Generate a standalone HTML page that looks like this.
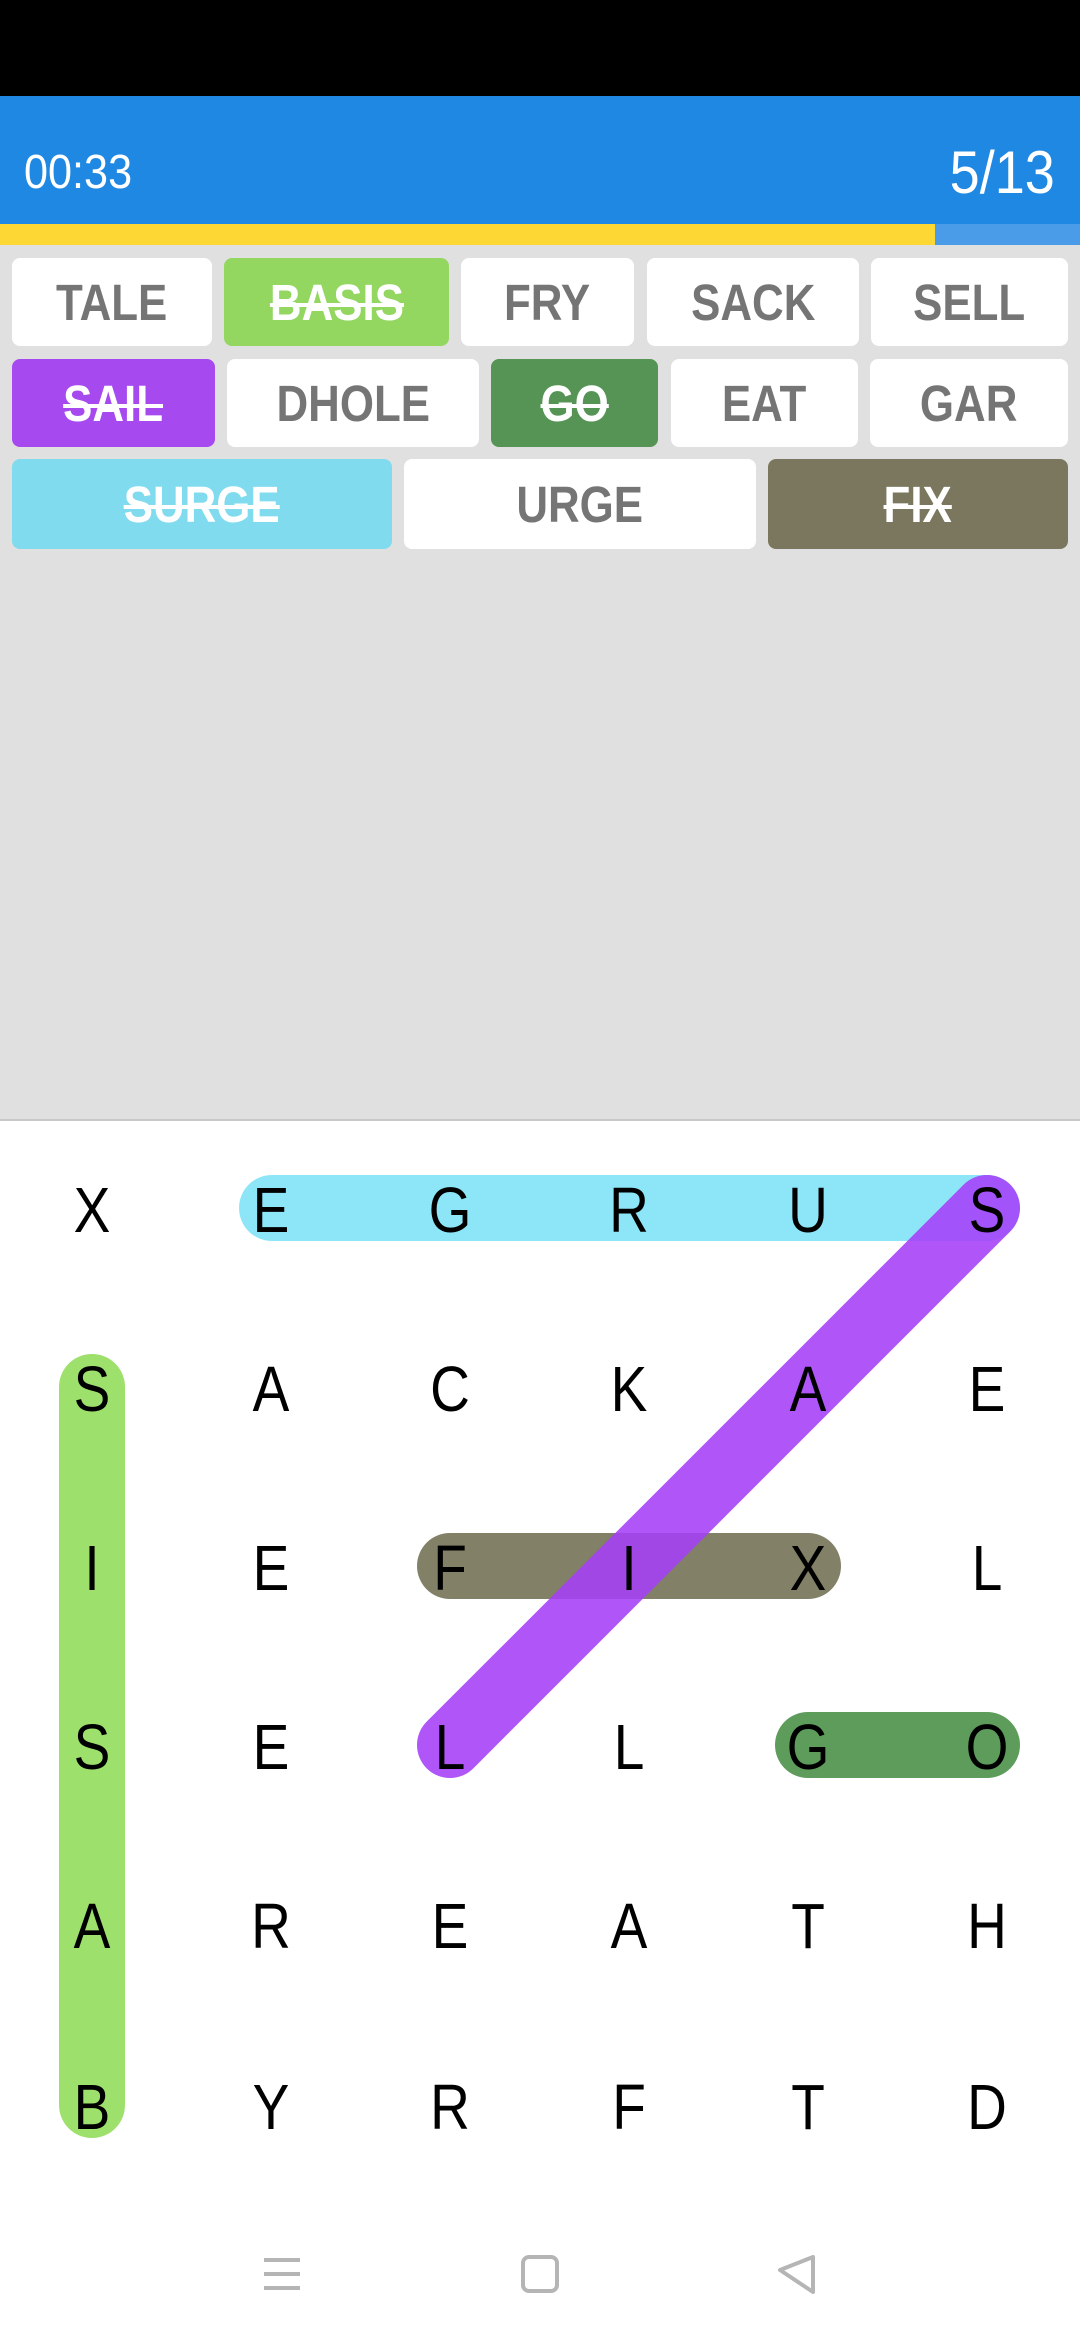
<!DOCTYPE html>
<html><head><meta charset="utf-8"><style>
*{margin:0;padding:0;box-sizing:border-box}
body{width:1080px;height:2340px;position:relative;background:#fff;font-family:"Liberation Sans",sans-serif;overflow:hidden}
.abs{position:absolute}
.chip{position:absolute;border-radius:8px;background:#fff;color:#757575;font-weight:bold;font-size:51px;display:flex;align-items:center;justify-content:center}
.chip.done{color:#fff;text-decoration:line-through;text-decoration-thickness:4px}
.chip span{display:inline-block;transform:scaleX(0.86)}
.l{position:absolute;width:120px;margin-left:-60px;text-align:center;font-size:64px;line-height:64px;margin-top:-30px;color:#000;transform:scaleX(0.86)}
</style></head><body>
<div class="abs" style="left:0;top:0;width:1080px;height:96px;background:#000"></div>
<div class="abs" style="left:0;top:96px;width:1080px;height:128px;background:#1f88e3"></div>
<div class="abs" style="left:24px;top:146px;color:#fff;font-size:48px;line-height:54px;transform:scaleX(0.9);transform-origin:left">00:33</div>
<div class="abs" style="right:25px;top:140px;color:#fff;font-size:60px;line-height:66px;transform:scaleX(0.9);transform-origin:right">5/13</div>
<div class="abs" style="left:0;top:224px;width:1080px;height:21px;background:#4a9be8"></div>
<div class="abs" style="left:0;top:224px;width:935px;height:21px;background:#fdd835"></div>
<div class="abs" style="left:0;top:245px;width:1080px;height:875px;background:#e0e0e0"></div>
<div class="abs" style="left:0;top:1119px;width:1080px;height:2px;background:#c8c8c8"></div>

<div class="chip" style="left:12px;top:258px;width:200px;height:88px"><span>TALE</span></div>
<div class="chip done" style="left:224px;top:258px;width:225px;height:88px;background:#93d660"><span>BASIS</span></div>
<div class="chip" style="left:461px;top:258px;width:173px;height:88px"><span>FRY</span></div>
<div class="chip" style="left:647px;top:258px;width:212px;height:88px"><span>SACK</span></div>
<div class="chip" style="left:871px;top:258px;width:197px;height:88px"><span>SELL</span></div>

<div class="chip done" style="left:12px;top:359px;width:203px;height:88px;background:#a64af0"><span>SAIL</span></div>
<div class="chip" style="left:227px;top:359px;width:252px;height:88px"><span>DHOLE</span></div>
<div class="chip done" style="left:491px;top:359px;width:167px;height:88px;background:#559455"><span>GO</span></div>
<div class="chip" style="left:671px;top:359px;width:187px;height:88px"><span>EAT</span></div>
<div class="chip" style="left:870px;top:359px;width:198px;height:88px"><span>GAR</span></div>

<div class="chip done" style="left:12px;top:459px;width:380px;height:90px;background:#80dbee"><span>SURGE</span></div>
<div class="chip" style="left:404px;top:459px;width:352px;height:90px"><span>URGE</span></div>
<div class="chip done" style="left:768px;top:459px;width:300px;height:90px;background:#7a775e"><span>FIX</span></div>

<svg class="abs" style="left:0;top:0" width="1080" height="2340">
<g stroke-linecap="round" stroke-width="66" fill="none">
<line x1="272" y1="1208" x2="987" y2="1208" stroke="#8ce6f8"/>
<line x1="92" y1="1387" x2="92" y2="2105" stroke="#9de06c"/>
<line x1="450" y1="1566" x2="808" y2="1566" stroke="#828067"/>
<line x1="808" y1="1745" x2="987" y2="1745" stroke="#5e9c5c"/>
<line x1="450" y1="1745" x2="987" y2="1208" stroke="#a53ff8" stroke-opacity="0.88"/>
</g>
<g stroke="#b5b5b5" stroke-width="4" fill="none" stroke-linejoin="round">
<line x1="264" y1="2260" x2="300" y2="2260"/>
<line x1="264" y1="2274" x2="300" y2="2274"/>
<line x1="264" y1="2288" x2="300" y2="2288"/>
<rect x="523" y="2257" width="34" height="34" rx="6"/>
<path d="M813 2257 L813 2292 L780 2270 Z"/>
</g>
</svg>

<div class="l" style="left:92px;top:1208px">X</div><div class="l" style="left:271px;top:1208px">E</div><div class="l" style="left:450px;top:1208px">G</div><div class="l" style="left:629px;top:1208px">R</div><div class="l" style="left:808px;top:1208px">U</div><div class="l" style="left:987px;top:1208px">S</div>
<div class="l" style="left:92px;top:1387px">S</div><div class="l" style="left:271px;top:1387px">A</div><div class="l" style="left:450px;top:1387px">C</div><div class="l" style="left:629px;top:1387px">K</div><div class="l" style="left:808px;top:1387px">A</div><div class="l" style="left:987px;top:1387px">E</div>
<div class="l" style="left:92px;top:1566px">I</div><div class="l" style="left:271px;top:1566px">E</div><div class="l" style="left:450px;top:1566px">F</div><div class="l" style="left:629px;top:1566px">I</div><div class="l" style="left:808px;top:1566px">X</div><div class="l" style="left:987px;top:1566px">L</div>
<div class="l" style="left:92px;top:1745px">S</div><div class="l" style="left:271px;top:1745px">E</div><div class="l" style="left:450px;top:1745px">L</div><div class="l" style="left:629px;top:1745px">L</div><div class="l" style="left:808px;top:1745px">G</div><div class="l" style="left:987px;top:1745px">O</div>
<div class="l" style="left:92px;top:1924px">A</div><div class="l" style="left:271px;top:1924px">R</div><div class="l" style="left:450px;top:1924px">E</div><div class="l" style="left:629px;top:1924px">A</div><div class="l" style="left:808px;top:1924px">T</div><div class="l" style="left:987px;top:1924px">H</div>
<div class="l" style="left:92px;top:2105px">B</div><div class="l" style="left:271px;top:2105px">Y</div><div class="l" style="left:450px;top:2105px">R</div><div class="l" style="left:629px;top:2105px">F</div><div class="l" style="left:808px;top:2105px">T</div><div class="l" style="left:987px;top:2105px">D</div>
</body></html>
